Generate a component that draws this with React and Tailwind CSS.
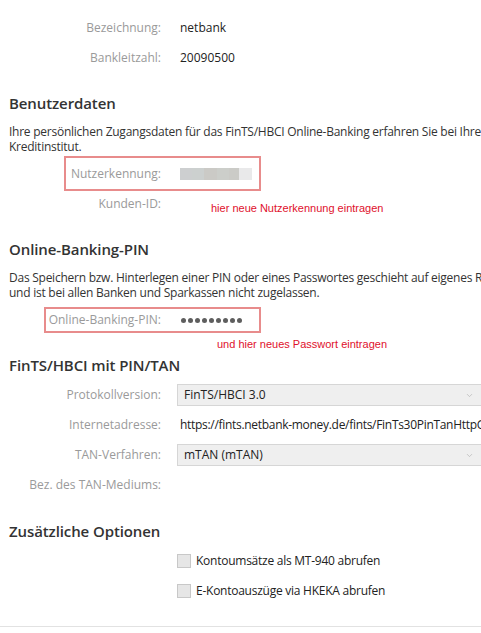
import { ChevronDown } from "lucide-react";

const FONT = { fontFamily: '"Open Sans", "Noto Sans", sans-serif' };

function Row({ label, children, className = "" }) {
    return (
        <div className={`relative h-[30px] flex items-center ${className}`}>
            <span className="w-[152px] shrink-0 text-right text-[12px] text-[#9a9a9a]">{label}</span>
            <div className="ml-[16px] flex items-center">{children}</div>
        </div>
    );
}

function Select({ value }) {
    return (
        <div className="w-[306px] h-[22px] flex items-center justify-between pl-[6px] pr-[6px] bg-[#efefef] border border-[#d6d6d6] text-[12px] text-[#222]">
            <span>{value}</span>
            <ChevronDown size={9} className="text-[#b8b8b8] mr-[2px]" />
        </div>
    );
}

function Check({ label }) {
    return (
        <div className="flex items-center gap-[5px]">
            <span className="w-[14px] h-[14px] bg-[#e6e6e6] border border-[#c8c8c8]" />
            <span className="text-[12px] text-[#222] tracking-[-0.25px]">{label}</span>
        </div>
    );
}

function Note({ children, className = "" }) {
    return (
        <span
            className={`absolute text-[11px] text-[#e0102c] whitespace-nowrap ${className}`}
            style={{ fontFamily: '"Liberation Sans", Arial, sans-serif' }}
        >
            {children}
        </span>
    );
}

export default function App() {
    return (
        <div className="w-[481px] h-[633px] overflow-hidden bg-white" style={FONT}>
            <div className="w-[520px] pt-[13px] pl-[9px]">
                <Row label="Bezeichnung:">
                    <span className="pl-[3px] text-[12px] text-[#222]">netbank</span>
                </Row>
                <Row label="Bankleitzahl:">
                    <span className="pl-[3px] text-[12px] text-[#222]">20090500</span>
                </Row>

                <h2 className="mt-[20px] h-[20px] leading-[20px] text-[15px] font-semibold text-[#333] tracking-[-0.1px]">Benutzerdaten</h2>
                <p className="mt-[11px] text-[12px] leading-[15px] text-[#333] whitespace-nowrap tracking-[-0.25px]">
                    Ihre persönlichen Zugangsdaten für das FinTS/HBCI Online-Banking erfahren Sie bei Ihrem
                    <br />
                    Kreditinstitut.
                </p>

                <Row label="Nutzerkennung:" className="mt-[5px]">
                    <div className="ml-[3px] flex h-[12px] w-[72px]">
                        <span className="w-[12px] bg-[#cdcfd0]" />
                        <span className="w-[12px] bg-[#ccd0cf]" />
                        <span className="w-[13px] bg-[#cbcac6]" />
                        <span className="w-[12px] bg-[#ccceca]" />
                        <span className="w-[10px] bg-[#cbcbc7]" />
                        <span className="w-[13px] bg-[#e9e9ea]" />
                    </div>
                    <div className="absolute left-[55px] top-[-3px] w-[197px] h-[35px] border-2 border-[#e88c8c]" />
                </Row>
                <Row label="Kunden-ID:">
                    <Note className="left-[202px] top-[11px]">hier neue Nutzerkennung eintragen</Note>
                </Row>

                <h2 className="mt-[20px] h-[20px] leading-[20px] text-[15px] font-semibold text-[#333] tracking-[-0.1px]">Online-Banking-PIN</h2>
                <p className="mt-[11px] text-[12px] leading-[15px] text-[#333] whitespace-nowrap tracking-[-0.25px]">
                    Das Speichern bzw. Hinterlegen einer PIN oder eines Passwortes geschieht auf eigenes Risiko
                    <br />
                    und ist bei allen Banken und Sparkassen nicht zugelassen.
                </p>

                <Row label="Online-Banking-PIN:" className="mt-[5px]">
                    <div className="ml-[4px] flex gap-[2px]">
                        {Array.from({ length: 9 }).map((_, i) => (
                            <span key={i} className="w-[5px] h-[5px] rounded-full bg-[#5e5e5e]" />
                        ))}
                    </div>
                    <div className="absolute left-[35px] top-[2px] w-[217px] h-[26px] border-2 border-[#e88c8c]" />
                    <Note className="left-[208px] top-[31px]">und hier neues Passwort eintragen</Note>
                </Row>

                <h2 className="mt-[20px] h-[20px] leading-[20px] text-[15px] font-semibold text-[#333] tracking-[-0.1px]">FinTS/HBCI mit PIN/TAN</h2>
                <Row label="Protokollversion:" className="mt-[5px]">
                    <Select value="FinTS/HBCI 3.0" />
                </Row>
                <Row label="Internetadresse:">
                    <span className="pl-[3px] text-[12px] text-[#222] whitespace-nowrap tracking-[-0.3px]">
                        https://fints.netbank-money.de/fints/FinTs30PinTanHttpGate
                    </span>
                </Row>
                <Row label="TAN-Verfahren:">
                    <Select value="mTAN (mTAN)" />
                </Row>
                <Row label="Bez. des TAN-Mediums:" />

                <h2 className="mt-[21px] h-[20px] leading-[20px] text-[15px] font-semibold text-[#333] tracking-[-0.1px]">Zusätzliche Optionen</h2>
                <Row label="" className="mt-[5px]">
                    <Check label="Kontoumsätze als MT-940 abrufen" />
                </Row>
                <Row label="">
                    <Check label="E-Kontoauszüge via HKEKA abrufen" />
                </Row>
            </div>
            <div className="mt-[20px] border-t border-[#e2e2e2]" />
        </div>
    );
}
